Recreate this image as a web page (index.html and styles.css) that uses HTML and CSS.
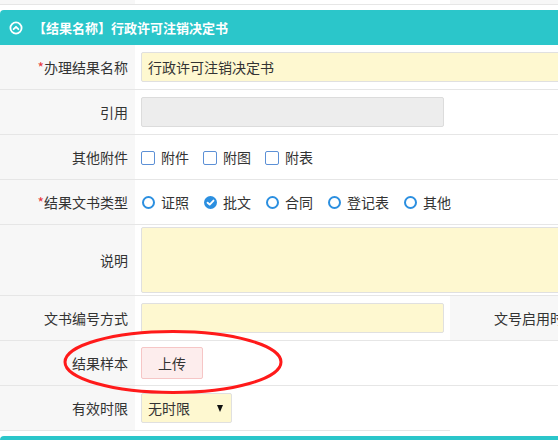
FILE: index.html
```html
<!DOCTYPE html>
<html lang="zh-CN">
<head>
<meta charset="utf-8">
<title>结果名称</title>
<link rel="stylesheet" href="styles.css">
</head>
<body>
<div class="page">
  <div class="prev-row">
    <div class="lab"></div><div class="val"></div><div class="lab"></div><div class="val"></div>
  </div>

  <section class="panel">
    <div class="panel-head">
      <svg class="head-icon" width="14" height="14" viewBox="0 0 14 14">
        <circle cx="7" cy="7" r="5.6" fill="none" stroke="#fff" stroke-width="1.8"/>
        <path d="M4.6 8.2 L7 5.8 L9.4 8.2" fill="none" stroke="#fff" stroke-width="1.8" stroke-linecap="round" stroke-linejoin="round"/>
      </svg>
      <span class="head-title">【结果名称】行政许可注销决定书</span>
    </div>

    <div class="form">
      <div class="lab"><span class="req">*</span>办理结果名称</div>
      <div class="val span3"><div class="input yellow">行政许可注销决定书</div></div>

      <div class="lab">引用</div>
      <div class="val"><div class="input disabled"></div></div>
      <div class="val span2"></div>

      <div class="lab">其他附件</div>
      <div class="val span3">
        <label class="opt"><span class="box"></span>附件</label>
        <label class="opt"><span class="box"></span>附图</label>
        <label class="opt"><span class="box"></span>附表</label>
      </div>

      <div class="lab"><span class="req">*</span>结果文书类型</div>
      <div class="val span3">
        <label class="opt"><span class="radio"></span>证照</label>
        <label class="opt"><span class="radio checked"><svg width="13" height="13" viewBox="0 0 13 13"><path d="M3.6 6.7 L5.7 8.6 L9.5 4.6" fill="none" stroke="#fff" stroke-width="1.9" stroke-linecap="round" stroke-linejoin="round"/></svg></span>批文</label>
        <label class="opt"><span class="radio"></span>合同</label>
        <label class="opt"><span class="radio"></span>登记表</label>
        <label class="opt"><span class="radio"></span>其他</label>
      </div>

      <div class="lab">说明</div>
      <div class="val span3"><div class="textarea yellow"></div></div>

      <div class="lab">文书编号方式</div>
      <div class="val"><div class="input yellow"></div></div>
      <div class="lab">文号启用时间</div>
      <div class="val"></div>

      <div class="lab">结果样本</div>
      <div class="val span3"><button class="upload" type="button">上传</button></div>

      <div class="lab">有效时限</div>
      <div class="val"><div class="select yellow"><span>无时限</span><span class="caret"></span></div></div>
      <div class="blank span2"></div>
    </div>
  </section>

  <div class="next-panel"></div>

  <svg class="annot" width="230" height="72" viewBox="0 0 230 72">
    <ellipse cx="110" cy="33" rx="108" ry="30.5" fill="none" stroke="#ff1a1a" stroke-width="3"/>
  </svg>
</div>
</body>
</html>
```

FILE: styles.css
```css
html, body {
  margin: 0;
  padding: 0;
  background: #fff;
  overflow: hidden;
}

.page {
  position: relative;
  width: 900px;
  font-family: "Noto Sans CJK SC", "Microsoft YaHei", sans-serif;
  font-size: 14px;
  color: #333;
}

.prev-row {
  display: grid;
  grid-template-columns: 135px 315px 135px 315px;
  height: 5px;
}
.prev-row > div {
  border-bottom: 1px solid #e6e6e6;
  box-sizing: border-box;
}

.panel {
  margin-top: 5px;
}

.panel-head {
  height: 35px;
  background: #2bc6ca;
  border-radius: 4px 4px 0 0;
  display: flex;
  align-items: center;
  color: #fff;
}
.head-icon {
  margin-left: 9px;
  margin-right: 10px;
}
.head-title {
  font-size: 13px;
  font-weight: bold;
  line-height: 16px;
  margin-top: 1px;
}

.form {
  display: grid;
  grid-template-columns: 135px 315px 135px 315px;
  grid-template-rows: 45px 45px 45px 45px 71px 45px 45px 45px;
}

.lab, .val, .blank {
  box-sizing: border-box;
}
.form .lab, .form .val {
  border-bottom: 1px solid #e6e6e6;
}
.lab {
  background: #f7f7f7;
  display: flex;
  align-items: center;
  justify-content: flex-end;
  padding-right: 7px;
  white-space: nowrap;
  overflow: hidden;
  line-height: 18px;
}
.val {
  display: flex;
  align-items: center;
  padding: 0 6px;
  background: #fff;
  line-height: 18px;
}
.span2 { grid-column: span 2; }
.span3 { grid-column: span 3; }

.req {
  color: #e8383d;
}

.input, .textarea, .select {
  box-sizing: border-box;
  border: 1px solid #e0e0e0;
  border-radius: 2px;
  width: 100%;
  height: 30px;
  display: flex;
  align-items: center;
  padding: 0 6px;
}
.yellow { background: #fef8d0; }
.disabled { background: #ededed; border-color: #dcdcdc; }

.textarea {
  height: 66px;
  margin-top: -1px;
}

.select {
  width: 91px;
  justify-content: space-between;
  padding: 0 8px 0 6px;
}
.caret {
  width: 0;
  height: 0;
  border-left: 3.5px solid transparent;
  border-right: 3.5px solid transparent;
  border-top: 7px solid #111;
}

.opt {
  display: inline-flex;
  align-items: center;
  margin-right: 14px;
}
.box {
  box-sizing: border-box;
  width: 14px;
  height: 14px;
  border: 1px solid #5c90d6;
  border-radius: 2px;
  margin-right: 6px;
  margin-top: 1px;
}
.radio {
  box-sizing: border-box;
  width: 13px;
  height: 13px;
  border: 2px solid #2b8fe0;
  border-radius: 50%;
  margin: 0 6px 0 1px;
  display: inline-flex;
}
.radio.checked {
  background: #2b8fe0;
  border: none;
}

.upload {
  box-sizing: border-box;
  width: 62px;
  height: 32px;
  background: #fdeded;
  border: 1px solid #f6c6c6;
  border-radius: 2px;
  color: #333;
  font-family: inherit;
  font-size: 14px;
  padding: 0;
  margin-top: -1px;
}

.next-panel {
  margin-top: 5px;
  height: 20px;
  background: #2bc6ca;
  border-radius: 4px 4px 0 0;
}

.annot {
  position: absolute;
  left: 63px;
  top: 329px;
  overflow: visible;
}
```
